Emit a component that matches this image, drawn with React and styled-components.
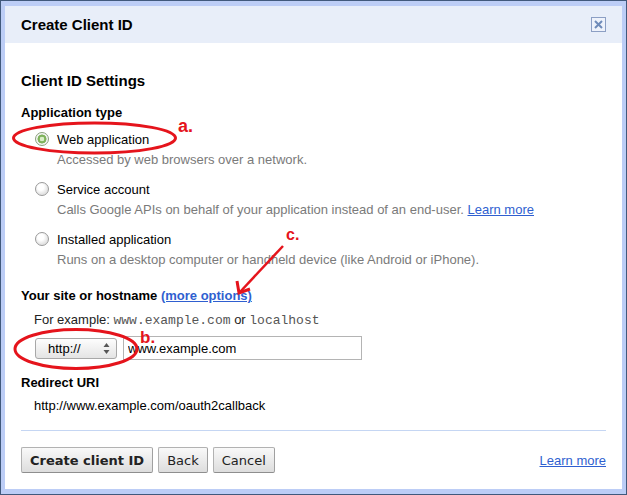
import React from 'react';
import styled, { createGlobalStyle } from 'styled-components';

const GlobalStyle = createGlobalStyle`
  html, body {
    margin: 0;
    padding: 0;
    background: #fff;
  }
  body {
    font-family: "Liberation Sans", Arial, sans-serif;
    font-size: 13px;
    color: #000;
  }
`;

const Frame = styled.div`
  position: relative;
  width: 627px;
  height: 495px;
  box-sizing: border-box;
  border: 1px solid #41597c;
  background: #bccdf6;
  padding: 5px 4px 5px 4px;
`;

const Panel = styled.div`
  height: 100%;
  background: #fff;
  display: flex;
  flex-direction: column;
`;

const Header = styled.div`
  height: 37px;
  flex: none;
  background: #e8eef9;
  display: flex;
  align-items: center;
  justify-content: space-between;
  padding: 0 16px;
`;

const Title = styled.h1`
  margin: 0;
  font-size: 15px;
  line-height: 18px;
  font-weight: bold;
`;

const CloseBox = styled.button`
  width: 15px;
  height: 15px;
  padding: 0;
  border: 1px solid #8c9fc4;
  background: #eef2fb;
  display: flex;
  align-items: center;
  justify-content: center;
  cursor: pointer;
`;

const Body = styled.div`
  flex: 1;
  display: flex;
  flex-direction: column;
  padding: 29px 16px 16px;
`;

const SectionTitle = styled.h2`
  margin: 0;
  font-size: 15px;
  line-height: 18px;
  font-weight: bold;
`;

const Label = styled.div`
  margin-top: ${(p) => p.$top}px;
  font-size: 13px;
  line-height: 16px;
  font-weight: bold;
`;

const OptionList = styled.div`
  margin-top: 9px;
  display: flex;
  flex-direction: column;
  gap: 10px;
`;

const Option = styled.div`
  display: grid;
  grid-template-columns: 14px 1fr;
  column-gap: 8px;
  padding-left: 14px;
`;

const Radio = styled.span`
  width: 14px;
  height: 14px;
  margin-top: 2px;
  box-sizing: border-box;
  border-radius: 50%;
  border: 1px solid ${(p) => (p.$checked ? '#8aa07c' : '#9a9a9a')};
  background: ${(p) =>
    p.$checked
      ? 'radial-gradient(circle at 50% 50%, #d9eec8 0 2px, #7fb35c 2.6px 4.2px, #f4f4f4 4.8px)'
      : 'radial-gradient(circle at 40% 35%, #ffffff 0 3px, #e4e4e4 7px)'};
`;

const OptionText = styled.div`
  display: flex;
  flex-direction: column;
`;

const OptionName = styled.div`
  line-height: 20px;
`;

const OptionDesc = styled.div`
  line-height: 20px;
  color: #7a7a7a;
`;

const Link = styled.a`
  color: #2f5fd0;
  text-decoration: underline;
  font-weight: ${(p) => (p.$bold ? 'bold' : 'normal')};
  cursor: pointer;
`;

const Hint = styled.div`
  margin-top: 6px;
  padding-left: 13px;
  line-height: 20px;
  color: #222;
`;

const Code = styled.span`
  font-family: "Liberation Mono", "Courier New", monospace;
  font-size: 13px;
  color: #555;
`;

const HostRow = styled.div`
  margin-top: 5px;
  padding-left: 14px;
  display: flex;
  align-items: center;
  gap: 6px;
`;

const Select = styled.div`
  width: 82px;
  height: 21px;
  box-sizing: border-box;
  border: 1px solid #a8a8a8;
  border-radius: 3px;
  background: linear-gradient(#fdfdfd, #e4e4e4);
  display: flex;
  align-items: center;
  justify-content: space-between;
  padding: 0 6px 0 12px;
  font-size: 13px;
`;

const TextInput = styled.input`
  width: 239px;
  height: 24px;
  box-sizing: border-box;
  border: 1px solid #b4b4b4;
  padding: 0 4px;
  font-family: "Liberation Sans", Arial, sans-serif;
  font-size: 13px;
  color: #000;
  outline: none;
`;

const Plain = styled.div`
  margin-top: 5px;
  padding-left: 13px;
  line-height: 20px;
`;

const Rule = styled.hr`
  margin: 14px 0 0;
  border: none;
  border-top: 1px solid #c5d6f3;
`;

const Footer = styled.div`
  margin-top: 16px;
  display: flex;
  align-items: flex-end;
`;

const Button = styled.button`
  height: 26px;
  margin-right: 5px;
  padding: 0 8px;
  border: 1px solid #b2b2b2;
  border-bottom-color: #8e8e8e;
  border-right-color: #a0a0a0;
  border-radius: 2px;
  background: linear-gradient(#f9f9f9, #dddddd);
  font-family: "DejaVu Sans", Verdana, sans-serif;
  font-size: 13px;
  font-weight: ${(p) => (p.$primary ? 'bold' : 'normal')};
  color: #222;
  cursor: pointer;
`;

const FooterLink = styled(Link)`
  margin-left: auto;
  margin-bottom: 5px;
`;

const Overlay = styled.svg`
  position: absolute;
  left: 0;
  top: 0;
  pointer-events: none;
`;

const options = [
  { name: 'Web application', desc: 'Accessed by web browsers over a network.', checked: true },
  { name: 'Service account', desc: 'Calls Google APIs on behalf of your application instead of an end-user.', learn: true },
  { name: 'Installed application', desc: 'Runs on a desktop computer or handheld device (like Android or iPhone).' },
];

const RED = '#e5141c';

const Annotations = () => (
  <Overlay width="627" height="495" viewBox="0 0 627 495">
    <ellipse cx="93.5" cy="137" rx="81" ry="15" fill="none" stroke={RED} strokeWidth="3" />
    <text x="177" y="131" fill={RED} fontFamily="Liberation Sans, Arial, sans-serif" fontWeight="bold" fontSize="18">a.</text>
    <ellipse cx="75" cy="348" rx="61" ry="19.5" fill="none" stroke={RED} strokeWidth="3" />
    <text x="139" y="342" fill={RED} fontFamily="Liberation Sans, Arial, sans-serif" fontWeight="bold" fontSize="17">b.</text>
    <text x="285" y="239" fill={RED} fontFamily="Liberation Sans, Arial, sans-serif" fontWeight="bold" fontSize="16">c.</text>
    <line x1="282" y1="245" x2="239" y2="291" stroke={RED} strokeWidth="2.5" />
    <polyline points="236,280 238,292 249,288" fill="none" stroke={RED} strokeWidth="3" strokeLinejoin="miter" />
  </Overlay>
);

export default function App() {
  return (
    <>
      <GlobalStyle />
      <Frame>
        <Panel>
          <Header>
            <Title>Create Client ID</Title>
            <CloseBox aria-label="Close">
              <svg width="9" height="9" viewBox="0 0 9 9">
                <path d="M1 1 L8 8 M8 1 L1 8" stroke="#6f8bb9" strokeWidth="2" />
              </svg>
            </CloseBox>
          </Header>
          <Body>
            <SectionTitle>Client ID Settings</SectionTitle>
            <Label $top={15}>Application type</Label>
            <OptionList>
              {options.map((o) => (
                <Option key={o.name}>
                  <Radio $checked={o.checked} />
                  <OptionText>
                    <OptionName>{o.name}</OptionName>
                    <OptionDesc>
                      {o.desc}
                      {o.learn && (
                        <>
                          {' '}
                          <Link>Learn more</Link>
                        </>
                      )}
                    </OptionDesc>
                  </OptionText>
                </Option>
              ))}
            </OptionList>
            <Label $top={18}>
              Your site or hostname <Link $bold>(more options)</Link>
            </Label>
            <Hint>
              For example: <Code>www.example.com</Code> or <Code>localhost</Code>
            </Hint>
            <HostRow>
              <Select>
                <span>http://</span>
                <svg width="7" height="13" viewBox="0 0 7 13">
                  <path d="M3.5 1 L6.5 5 L0.5 5 Z M3.5 12 L6.5 8 L0.5 8 Z" fill="#555" />
                </svg>
              </Select>
              <TextInput defaultValue="www.example.com" />
            </HostRow>
            <Label $top={15}>Redirect URI</Label>
            <Plain>http://www.example.com/oauth2callback</Plain>
            <Rule />
            <Footer>
              <Button $primary>Create client ID</Button>
              <Button>Back</Button>
              <Button>Cancel</Button>
              <FooterLink>Learn more</FooterLink>
            </Footer>
          </Body>
        </Panel>
        <Annotations />
      </Frame>
    </>
  );
}
